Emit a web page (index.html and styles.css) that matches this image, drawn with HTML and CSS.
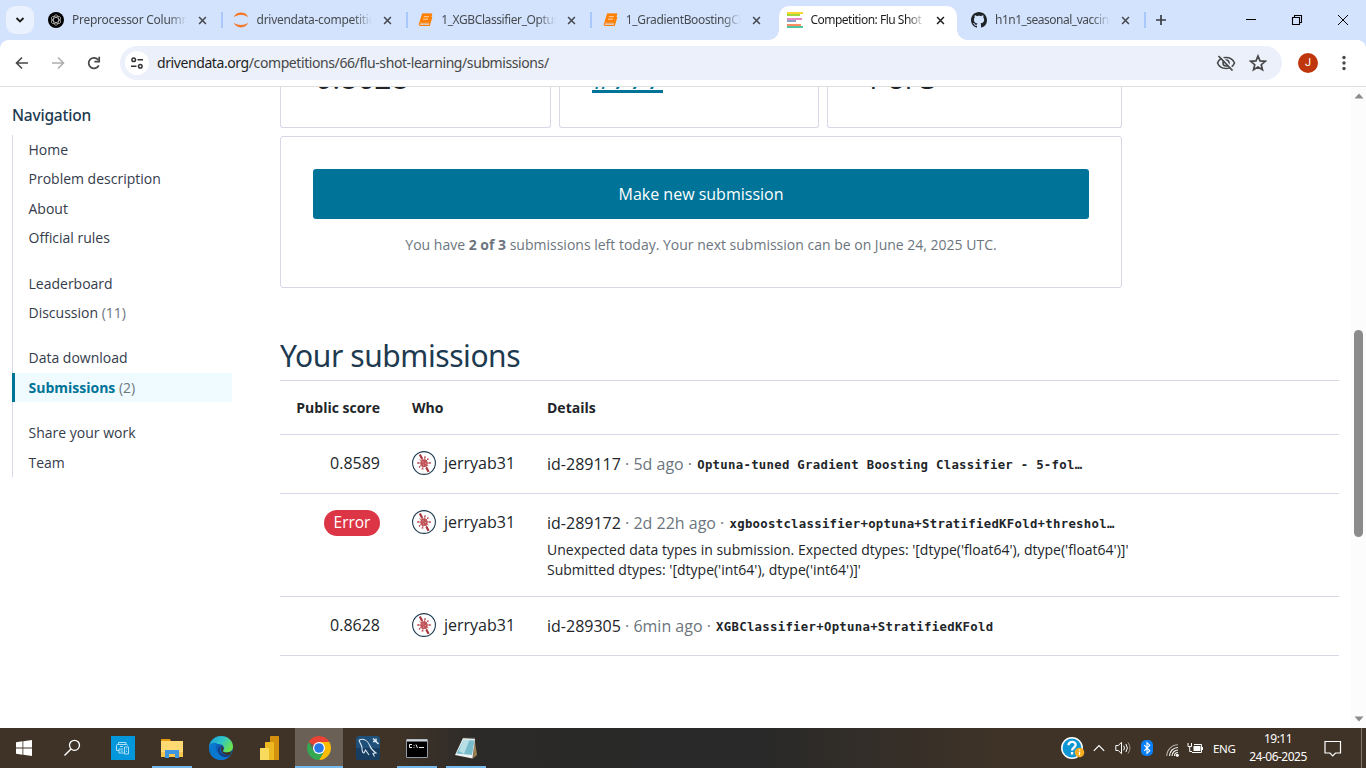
FILE: index.html
```html
<!DOCTYPE html>
<html lang="en">
<head>
<meta charset="utf-8">
<title>Competition: Flu Shot Learning</title>
<link rel="stylesheet" href="styles.css">
</head>
<body>
<svg width="0" height="0" class="defs" aria-hidden="true">
  <defs>
    <symbol id="x" viewBox="0 0 10 10"><path d="M1.2 1.2l7.6 7.6M8.8 1.2L1.2 8.8" fill="none" stroke="currentColor" stroke-width="1.7"/></symbol>
    <symbol id="book" viewBox="0 0 16 16"><path d="M5.200 2h9.400L12.200 11H3.200C2 11 2 13.300 3.300 13.300h9L14.800 5" fill="none" stroke="#ff7f00" stroke-width="1.200"/><path d="M5 1.800h9.500L12 10.800H2.300z" fill="#ff7f00"/><path d="M6.800 4.700h5M6 7.200h5" stroke="#ffd7ad" stroke-width="1"/></symbol>
    <symbol id="bug" viewBox="0 0 24 24"><circle cx="12" cy="12" r="11.4" fill="#fff" stroke="#1d3a50" stroke-width="1.1"/><g stroke="#b8484e" stroke-width=".9" fill="none"><path d="M12 12L8 4M12 12l5 9M12 12l1-6M12 12l4-4M12 12l6 0M12 12l4.500 3M12 12l-1.500 6M12 12l-5 4M12 12l-6 0M12 12L7.500 8.500"/><path d="M12 6h2M6 11v2M18 11v2M9.500 18h2M15.500 7.500l1 1M7 15.500l1 1" stroke-width="1.200"/></g><path d="M7.800 3.500l2.400 4.500M14.300 16.500l2.200 4.200" stroke="#a83840" stroke-width="2.200"/><ellipse cx="12" cy="12.200" rx="3.600" ry="3.900" fill="#c0565c"/><path d="M10.500 11h1M13 12.500h1M11 14h1" stroke="#dc9a9c"/></symbol>
  </defs>
</svg>

<header class="tabs">
  <div class="tab-search"><svg width="10" height="8" viewBox="0 0 10 8"><path d="M1.500 2L5 5.500 8.500 2" fill="none" stroke="#1f1f1f" stroke-width="1.900"/></svg></div>
  <div class="tab">
    <svg class="fav" viewBox="0 0 16 16"><circle cx="8" cy="8" r="8" fill="#000"/><g fill="none" stroke="#ccc" stroke-width=".7"><ellipse cx="8" cy="8" rx="2.500" ry="5.200"/><ellipse cx="8" cy="8" rx="2.500" ry="5.200" transform="rotate(60 8 8)"/><ellipse cx="8" cy="8" rx="2.500" ry="5.200" transform="rotate(120 8 8)"/></g></svg>
    <span class="t t1">Preprocessor Column</span><svg class="close"><use href="#x"/></svg><i class="sep"></i>
  </div>
  <div class="tab">
    <svg class="fav" viewBox="0 0 16 16"><path d="M.8 5.200C2 2 5 .6 8 .6s6 1.400 7.200 4.600C13 3.500 10.500 3 8 3S3 3.500.8 5.200zM.8 10.800C2 14 5 15.400 8 15.400s6-1.400 7.200-4.600C13 12.500 10.500 13 8 13s-5-.5-7.200-2.200z" fill="#f37726"/></svg>
    <span class="t t2">drivendata-competitic</span><svg class="close"><use href="#x"/></svg><i class="sep"></i>
  </div>
  <div class="tab">
    <svg class="fav"><use href="#book"/></svg>
    <span class="t t3">1_XGBClassifier_Optun</span><svg class="close"><use href="#x"/></svg><i class="sep"></i>
  </div>
  <div class="tab">
    <svg class="fav"><use href="#book"/></svg>
    <span class="t t4">1_GradientBoostingCl</span><svg class="close"><use href="#x"/></svg>
  </div>
  <div class="tab active">
    <svg class="fav" viewBox="0 0 16 16"><path fill="#f9d72f" d="M0 0h16v2H0z"/><path fill="#a2d83f" d="M0 2h13v2H0z"/><path fill="#e78ac3" d="M0 6h15v2H0z"/><path fill="#8da0cb" d="M0 8h9v2H0z"/><path fill="#fc8d62" d="M0 12h14v2H0z"/><path fill="#52c2a0" d="M0 14h16v2H0z"/></svg>
    <span class="t t5">Competition: Flu Shot</span><svg class="close"><use href="#x"/></svg>
  </div>
  <div class="tab">
    <svg class="fav" viewBox="0 0 16 16"><path fill="#1f2328" d="M8 0C3.580 0 0 3.580 0 8c0 3.540 2.290 6.530 5.470 7.590.4.070.55-.17.55-.38 0-.19-.01-.82-.01-1.490-2.010.37-2.530-.49-2.690-.94-.09-.23-.48-.94-.82-1.130-.28-.15-.68-.52-.01-.53.63-.01 1.080.58 1.230.82.72 1.210 1.870.87 2.330.66.07-.52.28-.87.51-1.070-1.780-.2-3.640-.89-3.640-3.950 0-.87.31-1.590.82-2.150-.08-.2-.36-1.020.08-2.120 0 0 .67-.21 2.200.82.64-.18 1.320-.27 2-.27s1.360.09 2 .27c1.530-1.040 2.200-.82 2.200-.82.44 1.100.16 1.920.08 2.120.51.56.82 1.270.82 2.150 0 3.070-1.870 3.750-3.650 3.950.29.25.54.73.54 1.480 0 1.070-.01 1.930-.01 2.200 0 .21.15.46.55.38A8.010 8.010 0 0016 8c0-4.420-3.580-8-8-8z"/></svg>
    <span class="t t6">h1n1_seasonal_vaccin</span><svg class="close"><use href="#x"/></svg><i class="sep"></i>
  </div>
  <svg class="newtab" width="12" height="12" viewBox="0 0 12 12"><path d="M6 1v10M1 6h10" stroke="#3a3d42" stroke-width="1.700"/></svg>
  <div class="winctl">
    <svg viewBox="0 0 12 12"><path d="M1 5.500h10" stroke="#000"/></svg>
    <svg viewBox="0 0 12 12"><path d="M1.500 3.500h7v7h-7zM3.500 3.500v-2h7v7h-2" fill="none" stroke="#000" stroke-width="1.100"/></svg>
    <svg viewBox="0 0 12 12"><path d="M1 1l10 10M11 1L1 11" stroke="#000"/></svg>
  </div>
</header>

<div class="toolbar">
  <svg class="nav" viewBox="0 0 16 16"><path d="M14 8H3M8 2.500L2.500 8 8 13.500" fill="none" stroke="#474747" stroke-width="1.600"/></svg>
  <svg class="nav" viewBox="0 0 16 16"><path d="M2 8h11M8 2.500L13.500 8 8 13.500" fill="none" stroke="#aeaeae" stroke-width="1.600"/></svg>
  <svg class="nav" viewBox="0 0 16 16"><path d="M12.800 10.300A5.300 5.300 0 1 1 12.300 5" fill="none" stroke="#474747" stroke-width="1.700"/><path d="M13.200 1.700v5H8.400" fill="none" stroke="#474747" stroke-width="1.700"/></svg>
  <div class="omnibox">
    <span class="site"><svg width="14" height="14" viewBox="0 0 14 14"><g fill="none" stroke="#303134" stroke-width="1.500"><circle cx="3.700" cy="3.700" r="1.800"/><path d="M7.500 3.700H13M1 10.300h5.500"/><circle cx="10.300" cy="10.300" r="1.800"/></g></svg></span>
    <div class="url"><span class="host">drivendata.org</span><span>/competitions/66/flu-shot-learning/submissions/</span></div>
    <svg class="eye" viewBox="0 0 20 16"><g fill="none" stroke="#474747" stroke-width="1.600"><path d="M1.500 8C3 4.500 6.300 2.500 10 2.500S17 4.500 18.500 8C17 11.500 13.700 13.500 10 13.500S3 11.500 1.500 8z"/><circle cx="10" cy="8" r="3"/></g><path d="M4.500 .5l13.500 15" stroke="#ebf0fa" stroke-width="1.800"/><path d="M2.500 1l14 14.500" stroke="#474747" stroke-width="1.700"/></svg>
    <svg class="star" viewBox="0 0 16 16"><path d="M8 1.800l1.800 4.300 4.600.4-3.500 3 1.100 4.500L8 11.600 4 14l1.100-4.500-3.500-3 4.600-.4z" fill="none" stroke="#474747" stroke-width="1.500"/></svg>
  </div>
  <span class="avatar">J</span>
  <svg class="dots" width="4" height="16" viewBox="0 0 4 16"><g fill="#474747"><circle cx="2" cy="2.500" r="1.700"/><circle cx="2" cy="8" r="1.700"/><circle cx="2" cy="13.500" r="1.700"/></g></svg>
</div>

<div class="page">
  <nav class="side">
    <h2>Navigation</h2>
    <ul>
      <li>Home</li><li>Problem description</li><li>About</li><li>Official rules</li>
      <li class="gap">Leaderboard</li><li>Discussion <em>(11)</em></li>
      <li class="gap">Data download</li><li class="on"><b>Submissions</b> <em>(2)</em></li>
      <li class="gap">Share your work</li><li>Team</li>
    </ul>
  </nav>
  <main>
    <div class="stats">
      <div class="stat s1"><span>0.8628</span></div>
      <div class="stat s2"><span class="rank">#777</span></div>
      <div class="stat s3"><span>1 of 3</span></div>
    </div>
    <section class="submit">
      <div class="btn">Make new submission</div>
      <p>You have <b>2 of 3</b> submissions left today. Your next submission can be on June 24, 2025 UTC.</p>
    </section>
    <h1>Your submissions</h1>
    <div class="table">
      <div class="row head"><div class="score">Public score</div><div>Who</div><div>Details</div></div>
      <div class="row">
        <div class="score">0.8589</div>
        <div class="who"><svg><use href="#bug"/></svg>jerryab31</div>
        <div class="det">id-289117 <em>· 5d ago ·</em> <code>Optuna-tuned Gradient Boosting Classifier - 5-fol…</code></div>
      </div>
      <div class="row tall">
        <div class="score"><span class="badge">Error</span></div>
        <div class="who"><svg><use href="#bug"/></svg>jerryab31</div>
        <div class="det">id-289172 <em>· 2d 22h ago ·</em> <code>xgboostclassifier+optuna+StratifiedKFold+threshol…</code>
          <p>Unexpected data types in submission. Expected dtypes: '[dtype('float64'), dtype('float64')]'<br>Submitted dtypes: '[dtype('int64'), dtype('int64')]'</p>
        </div>
      </div>
      <div class="row">
        <div class="score">0.8628</div>
        <div class="who"><svg><use href="#bug"/></svg>jerryab31</div>
        <div class="det">id-289305 <em>· 6min ago ·</em> <code>XGBClassifier+Optuna+StratifiedKFold</code></div>
      </div>
    </div>
  </main>
  <div class="scroll">
    <svg width="10" height="6" viewBox="0 0 10 6"><path d="M5 .5L9.500 5.500h-9z" fill="#8b8b8b"/></svg>
    <i></i>
    <svg width="10" height="6" viewBox="0 0 10 6"><path d="M5 5.500L9.500.5h-9z" fill="#8b8b8b"/></svg>
  </div>
</div>

<footer class="taskbar">
  <div class="app"><svg width="16" height="16" viewBox="0 0 16 16"><path fill="#fff" d="M0 2.200L6.500 1.300V7.600H0zM7.300 1.200L16 0v7.600H7.300zM0 8.400h6.500v6.300L0 13.800zM7.300 8.400H16V16l-8.700-1.200z"/></svg></div>
  <div class="app find"><svg width="18" height="18" viewBox="0 0 18 18"><circle cx="11.500" cy="6.300" r="5" fill="none" stroke="#fff" stroke-width="1.300"/><path d="M8 10L1.500 16.500" stroke="#fff" stroke-width="1.400"/></svg></div>
  <div class="app a3"><svg width="24" height="24" viewBox="0 0 24 24"><path fill="#0497dc" d="M0 0h24v24H0z"/><g fill="none" stroke="#d9f0fb" stroke-width=".8"><path d="M7.500 8.500V6.500h7.500v2M8 14.500H5.500V9.500c0-.6.400-1 1-1h9c.600 0 1 .4 1 1M13 17H8v-4h4M9.500 15h2.500M9 10.500h3"/><path d="M13.500 11h4v7h-4zM15 13h1M15 15.500h1"/></g></svg></div>
  <div class="app run"><svg width="22" height="20" viewBox="0 0 22 20"><path fill="#ffd971" d="M0 3h22v16H0z"/><path fill="#e39b12" d="M0 1h9l1 2H0z"/><path fill="#f7c64f" d="M0 14h22v5H0z"/><path fill="#3e97e0" d="M4 12h14v8h-4v-4H8v4H4z"/></svg></div>
  <div class="app"><svg width="24" height="24" viewBox="0 0 24 24"><defs><linearGradient id="e1" x1="0" y1="0" x2="1" y2=".5"><stop offset="0" stop-color="#1a9bdb"/><stop offset=".55" stop-color="#30c6c8"/><stop offset="1" stop-color="#6be24e"/></linearGradient></defs><circle cx="12" cy="12" r="12" fill="#0f5fb8"/><path d="M0 11C1 4 6 0 12 0c7 0 12 5 12 10.500 0 4-3 6-6.500 6-3 0-4-1.300-3-2.500 2-3-1-6-5-6-4 0-8 2-9 5z" fill="url(#e1)"/><path d="M0 11C1 7 5 6 8.500 7.500 6 9 6 13 8 16c3 4.500 9 5 13.500 3C18 24 12 25 7 23 2 21 0 16 0 11z" fill="#0b78d0"/><path d="M11 12c-1 4 2 8 10 7-4 5-12 1-12-5 0-3 3-5 5-4-2 0-3 1-3 2z" fill="#123f83"/><path d="M12.500 10c2 1 2.500 2.500 1.500 4-1 1.200 0 2.500 3.500 2.500 2 0 4-.6 5.200-1.700L21.500 19c-5 .5-9.500-1.500-9.500-6z" fill="#3f3326"/></svg></div>
  <div class="app"><svg width="20" height="24" viewBox="0 0 20 24"><path fill="#d4900f" d="M10 1c0-.6.400-1 1-1h7c.6 0 1 .4 1 1v23h-9z"/><path fill="#edb921" d="M5 7c0-.6.400-1 1-1h7c.6 0 1 .4 1 1v17H5z"/><path fill="#f8da5d" d="M0 13c0-.6.400-1 1-1h7c.6 0 1 .4 1 1v11H0z"/></svg></div>
  <div class="app run cur"><svg width="24" height="24" viewBox="0 0 24 24"><path fill="#ea4335" d="M12 12L1.610 6a12 12 0 0120.780 0z"/><path fill="#fbbc04" d="M12 12V6h10.390A12 12 0 0112 24l5.200-9z"/><path fill="#34a853" d="M12 24A12 12 0 011.610 6l5.200 9L12 17.900l3.500 0z"/><path fill="#34a853" d="M6.800 15l5.200 2 5.200-2L12 24z"/><circle cx="12" cy="12" r="6" fill="#fff"/><circle cx="12" cy="12" r="4.800" fill="#2877e8"/></svg></div>
  <div class="app"><svg width="24" height="24" viewBox="0 0 24 24"><rect width="24" height="24" rx="3" fill="#1e5079"/><path d="M0 12h24v9c0 2-1 3-3 3H3c-2 0-3-1-3-3z" fill="#173e61"/><path d="M3 4c5-2 9 1 11 6 1 3 3 5 6 7l-3 .5 1.500 3M3 4c1 4 3 5 3 8s1 5 2 5l1.500-3 3.500 5" fill="none" stroke="#d9e6f0" stroke-width="1.100"/><path d="M17 2.500l2.500 2.500M20 5.500l2.500 2.500M20 2.500v3h-3" stroke="#d9e6f0" stroke-width="1.500" fill="none"/></svg></div>
  <div class="app run"><svg width="22" height="19" viewBox="0 0 22 19"><path fill="#000" stroke="#929da8" d="M.5.500h21v18H.5z"/><path d="M1 1.500h20" stroke="#d0d6df" stroke-width="2"/><path d="M6 5.500H3.500v3H6M8 6v.8M8 8v.8M10 5.500l1.500 3.500M13 8.500h5" stroke="#eee" fill="none"/></svg></div>
  <div class="app run"><svg width="24" height="22" viewBox="0 0 24 22"><path fill="#9a8052" d="M20.500 2l2.500 16-4 3.500z"/><path fill="#f2f4f4" d="M1 18L9 1l12 1-2.500 19.500L1 18z"/><path fill="#78bccb" d="M2.500 16.500L9.500 3l11 .5-2.500 14.500z"/><path fill="#b7dfe5" d="M5 14L9.500 3h6L10 17z"/><path d="M9.500 1.500h11" stroke="#9ba1a1" stroke-width="1.600" stroke-dasharray="1 1"/></svg></div>
  <div class="tray">
    <svg class="help" width="25" height="22" viewBox="0 0 25 22"><circle cx="11" cy="11" r="10.200" fill="#0d95d4" stroke="#fff" stroke-width="1.500"/><path d="M7.500 8.200C7.500 3.700 15 4 14.600 8c-.2 2.500-3.500 2.600-3.500 5.500M11.100 15v2.500" fill="none" stroke="#fff" stroke-width="2.300"/><circle cx="18.500" cy="15.500" r="4.800" fill="#f6ad22"/><path d="M18.500 12.500v1.300M18.500 14.800v3.500" stroke="#fff" stroke-width="1.300"/></svg>
    <svg class="chev" width="12" height="8" viewBox="0 0 12 8"><path d="M.8 6.800L6 1.600l5.200 5.200" fill="none" stroke="#fff" stroke-width="1.200"/></svg>
    <svg class="vol" width="16" height="14" viewBox="0 0 16 14"><path d="M.8 4.500h2.500L6.500 1.300v11.400L3.300 9.500H.8z" fill="none" stroke="#fff"/><path d="M8.700 4.700q1.500 2.300 0 4.600M10.900 3q3 4 0 8" fill="none" stroke="#fff"/><path d="M13 1.500q4 5.500 0 11" fill="none" stroke="#9c958d"/></svg>
    <svg class="bt" width="12" height="16" viewBox="0 0 12 16"><rect width="12" height="16" rx="5" fill="#0a7ff5"/><path d="M3.200 5.200L8.800 10.800 6 13.200V2.800l2.800 2.400-5.600 5.600" fill="none" stroke="#fff" stroke-width="1.100"/></svg>
    <svg class="wifi" width="13" height="13" viewBox="0 0 13 13"><g fill="none" stroke="#f5f4f2" stroke-width="1.100"><path d="M.8 12A11.200 11.200 0 0112 .8" stroke="#b5aea6"/><path d="M3.500 12A8.500 8.500 0 0112 3.500M6 12a6 6 0 016-6M8.500 12A3.500 3.500 0 0112 8.500"/></g><circle cx="11.300" cy="11.300" r="1.500" fill="#fff"/></svg>
    <svg class="bat" width="16" height="12" viewBox="0 0 16 12"><path d="M1 1v3.500h3.500V1M2.700 4.500V9.500H5M7 2.500h7.500v8H5" fill="none" stroke="#fff"/><path fill="#fff" d="M6.500 4h7v5H6.500zM15 5h1v3h-1z"/></svg>
    <span class="lang">ENG</span>
    <div class="clock"><span>19:11</span><span class="date">24-06-2025</span></div>
    <svg class="note" width="18" height="17" viewBox="0 0 18 17"><path d="M1 1.500h15.500v11.500H11.500L8.700 15.800 6 13H1z" fill="none" stroke="#fff" stroke-width="1.200"/></svg>
    <i class="peek"></i>
  </div>
</footer>
</body>
</html>
```

FILE: styles.css
```css
* { box-sizing: border-box; }
body { margin: 0; width: 1366px; height: 768px; overflow: hidden; display: flex; flex-direction: column; background: #fff; font-family: "Open Sans", sans-serif; color: #212529; }
.defs { position: absolute; }
svg { flex: none; display: block; }
em { font-style: normal; color: #6c757d; }

/* tab strip */
.tabs { flex: none; height: 40px; background: #d3e3fd; display: flex; align-items: center; font-family: "Noto Sans", sans-serif; }
.tab-search { width: 28px; height: 28px; margin: 0 6px; border-radius: 9px; background: #e9f1fe; display: flex; align-items: center; justify-content: center; }
.tab { flex: none; width: 184.6px; height: 34px; margin-top: 6px; padding-left: 8px; display: flex; align-items: center; padding-bottom: 6px; }
.fav { width: 16px; height: 16px; }
.t { width: 115px; margin-left: 8px; font-size: 12px; line-height: 18px; color: #474b50; white-space: nowrap; overflow: hidden; letter-spacing: -.3px; -webkit-mask-image: linear-gradient(90deg, #000 84%, transparent); mask-image: linear-gradient(90deg, #000 84%, transparent); }
.t1 { letter-spacing: -.25px; }
.t3 { letter-spacing: -.4px; }
.t4 { letter-spacing: -.35px; }
.t5 { letter-spacing: -.5px; }
.t6 { letter-spacing: -.5px; }
.close { width: 9px; height: 9px; margin-left: 11px; color: #43474d; }
.sep { width: 2px; height: 16px; margin-left: 14px; background: #a8c7fa; }
.active { position: relative; }
.active::before { content: ""; position: absolute; z-index: 0; left: .6px; top: 0; width: 178px; height: 34px; border-radius: 10px 10px 0 0; background: #fff; }
.active::after { content: ""; position: absolute; z-index: 0; left: -9.400px; bottom: 0; width: 198px; height: 10px; background: radial-gradient(circle at 0 0, transparent 9.500px, #fff 10px) left / 10px 10px no-repeat, radial-gradient(circle at 100% 0, transparent 9.500px, #fff 10px) right / 10px 10px no-repeat; }
.active > * { position: relative; z-index: 1; }
.active .t, .active .close { color: #1f1f1f; }
.active .fav { margin: 0 -.6px 0 .6px; }
.newtab { margin-left: 7px; }
.winctl { margin-left: auto; display: flex; gap: 34px; padding-right: 17px; }
.winctl svg { width: 12px; height: 12px; }

/* toolbar */
.toolbar { flex: none; height: 47px; display: flex; align-items: center; padding-left: 14px; border-bottom: 1px solid #dfe1e0; background: radial-gradient(circle at 100% 100%, #fff 7.500px, #d3e3fd 8px) left top / 8px 8px no-repeat, radial-gradient(circle at 0 100%, #fff 7.500px, #d3e3fd 8px) right top / 8px 8px no-repeat, #fff; }
.nav { width: 16px; height: 16px; margin-right: 20px; }
.omnibox { width: 1162px; height: 34px; margin-left: -2px; border-radius: 17px; background: #ebf0fa; display: flex; align-items: center; padding: 0 15px 0 5px; }
.site { width: 24px; height: 24px; border-radius: 50%; background: #fff; display: flex; align-items: center; justify-content: center; }
.url { margin: -1px 0 0 8px; flex: 1; display: flex; font-family: "Noto Sans", sans-serif; font-size: 14px; letter-spacing: -.41px; color: #474747; }
.host { color: #1f1f1f; }
.eye { width: 20px; height: 16px; }
.star { width: 18px; height: 18px; margin-left: 13px; }
.avatar { width: 20px; height: 20px; margin-left: 16px; border-radius: 50%; background: #bf360c; color: #fff; font: 11px/20px Roboto, sans-serif; text-align: center; }
.dots { margin-left: 24px; }

/* page */
.page { flex: none; height: 641px; display: flex; overflow: hidden; }
.side { width: 232px; padding: 16px 0 0 12px; }
.side h2 { margin: 0; height: 32px; font: 500 15.500px/24px "Noto Sans", sans-serif; letter-spacing: -.2px; color: #1d3a50; }
.side ul { list-style: none; margin: 0; padding: 0; border-left: 1px solid #d7d7e8; font-size: 14px; color: #343c4b; height: 342px; }
.side li { height: 29.400px; line-height: 29.400px; padding-left: 15.500px; }
.side .gap { margin-top: 16px; }
.side .on { margin-left: -1px; border-left: 3px solid #007398; background: #effbff; padding-left: 13.500px; }
.on b { color: #007398; }
main { width: 1059px; margin-left: 48px; }
.stats { display: flex; gap: 8px; height: 41px; width: 842px; }
.stat { border: 1px solid #d7d7e8; border-top: 0; border-radius: 0 0 3px 3px; padding-left: 34px; font-size: 30px; }
.stat span { display: block; width: max-content; margin-top: -29px; line-height: 40px; }
.s1 { width: 271px; }
.s2 { width: 260px; padding-left: 32px; }
.s3 { flex: 1; padding-left: 36px; letter-spacing: -1px; }
.stat .rank { color: #007398; height: 35px; border-bottom: 3px solid #007398; }
.submit { margin-top: 8px; width: 842px; height: 152px; border: 1px solid #d7d7e8; border-radius: 3px; padding: 32px; text-align: center; }
.btn { height: 50px; line-height: 50px; border-radius: 3px; background: #007398; color: #fff; font-size: 16px; }
.submit p { margin: 15px 0 0; font-size: 14px; line-height: 22px; color: #6c757d; }
h1 { margin: 47px 0 0; height: 45px; font: 400 30px/42px "Noto Sans", sans-serif; letter-spacing: -.43px; color: #1d3a50; }
.table { border-top: 1px solid #d7d7e8; font-size: 16px; }
.row { display: grid; grid-template-columns: 100px 103px 1fr; column-gap: 32px; height: 59px; padding-top: 16px; line-height: 24px; border-bottom: 1px solid #d7d7e8; }
.head { height: 54px; padding-top: 15px; font-size: 14px; font-weight: 700; }
.tall { height: 103px; }
.score { text-align: right; }
.who { display: flex; gap: 8px; height: 24px; }
.who svg { width: 24px; height: 24px; }
.det { white-space: nowrap; padding-top: 1px; }
.det em { margin-right: 1px; }
.det p { margin: 5px 0 0; font-size: 14px; line-height: 20px; }
code { font: 700 12.300px/1 "DejaVu Sans Mono", monospace; letter-spacing: .3px; position: relative; top: -1px; }
.badge { display: block; width: 56px; height: 26px; line-height: 25px; margin: 0 0 0 auto; border-radius: 13px; background: #dc3545; color: #fff; text-align: center; font-size: 15.500px; }
.scroll { width: 15px; margin-left: auto; background: #fcfcfc; display: flex; flex-direction: column; align-items: center; padding: 6px 0; }
.scroll i { width: 9px; height: 207px; margin: 231px 0 auto; border-radius: 4.500px; background: #8b8b8b; }

/* taskbar */
.taskbar { flex: none; height: 40px; display: flex; background: linear-gradient(90deg, #3f3327 0 400px, #2b2a29 480px, #292929 760px, #3f3327 1000px); }
.app { width: 48px; margin-right: 1px; display: flex; align-items: center; justify-content: center; }
.find { padding-right: 2px; }
.a3 { margin-left: 1px; }
.run { background: linear-gradient(#76b9ed, #76b9ed) bottom / 40px 2px no-repeat; }
.cur { background: linear-gradient(#76b9ed, #76b9ed) bottom / 100% 2px no-repeat, #6b6055; }
.tray { margin-left: auto; width: 305px; display: flex; align-items: center; color: #fff; font-family: "Noto Sans", sans-serif; font-size: 12px; }
.chev { margin-left: 7px; }
.vol { margin-left: 10px; }
.bt { margin-left: 10px; }
.wifi { margin-left: 13px; margin-top: 4px; }
.bat { margin-left: 8px; }
.lang { margin-left: 10px; width: 26px; font-size: 11.500px; letter-spacing: -.3px; }
.clock { width: 64px; margin-left: 7px; display: flex; flex-direction: column; align-items: center; line-height: 18px; letter-spacing: -.5px; }
.note { margin-left: 14px; }
.peek { width: 1px; height: 40px; margin: 0 4px 0 auto; background: #83796e; }
```
